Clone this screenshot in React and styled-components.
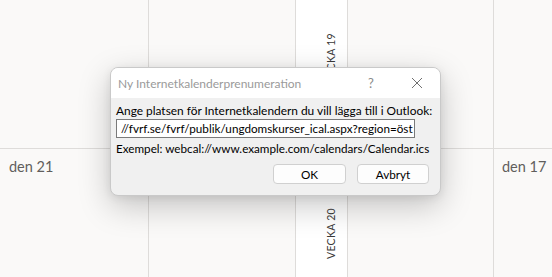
import React from "react";
import styled, { createGlobalStyle } from "styled-components";

const Global = createGlobalStyle`
  html, body { margin: 0; padding: 0; }
  body {
    width: 552px; height: 277px; overflow: hidden;
    background: #faf9f8;
    font-family: "Lato", "Noto Sans", sans-serif;
  }
`;

const Viewport = styled.div`
  width: 552px;
  height: 277px;
  overflow: hidden;
  position: relative;
`;

const Grid = styled.div`
  height: 277px;
  display: grid;
  grid-template-columns: 148px 146px 51px 145px 1fr;
  grid-template-rows: 148px 1fr;
  gap: 1px;
  background: #dedcda;
`;

const DayCell = styled.div`
  background: #faf9f8;
  color: #605e5c;
  font-size: 14.5px;
  white-space: nowrap;
  display: flex;
  align-items: flex-start;
  padding-left: ${(p) => (p.$first ? "9px" : "8px")};
  padding-top: 9px;
`;

const WeekCell = styled.div`
  background: #ffffff;
  display: flex;
  align-items: flex-start;
  justify-content: flex-end;
  padding-right: 10px;
  padding-top: ${(p) => p.$top}px;
`;

const WeekLabel = styled.span`
  writing-mode: vertical-rl;
  transform: rotate(180deg);
  font-size: 10.5px;
  letter-spacing: 0.3px;
  color: #3b3a39;
`;

const Dialog = styled.div`
  position: absolute;
  left: 110px;
  top: 67px;
  width: 331px;
  height: 129px;
  box-sizing: border-box;
  border-radius: 8px;
  border: 1px solid #c9c9c9;
  background: #f0f0f0;
  box-shadow: 0 10px 32px rgba(0, 0, 0, 0.22), 0 2px 8px rgba(0, 0, 0, 0.08);
  overflow: hidden;
  display: flex;
  flex-direction: column;
`;

const TitleBar = styled.div`
  height: 30px;
  background: #ffffff;
  display: flex;
  align-items: center;
  padding-left: 7px;
  color: #9a9a9a;
  font-size: 12px;
  white-space: nowrap;
`;

const Title = styled.span`
  flex: 1;
`;

const TitleButton = styled.span`
  width: 46px;
  height: 30px;
  display: flex;
  align-items: center;
  justify-content: center;
  color: #8a8a8a;
  font-size: 13px;
`;

const Body = styled.div`
  flex: 1;
  padding: 4px 11px 11px 5px;
  display: flex;
  flex-direction: column;
  font-size: 11.7px;
  color: #000;
  white-space: nowrap;
`;

const Label = styled.div`
  height: 17px;
  line-height: 17px;
  font-size: 11.9px;
`;

const Input = styled.div`
  width: 299px;
  height: 19px;
  box-sizing: border-box;
  border: 1px solid #7a7a7a;
  background: #fff;
  padding-left: 4px;
  line-height: 17px;
  overflow: hidden;
`;

const Example = styled.div`
  margin-top: 2px;
  height: 17px;
  line-height: 17px;
`;

const Buttons = styled.div`
  margin-top: auto;
  display: flex;
  justify-content: flex-end;
  gap: 11px;
`;

const Button = styled.div`
  width: ${(p) => p.$w}px;
  height: 20px;
  box-sizing: border-box;
  border: 1px solid #d0d0d0;
  border-radius: 4px;
  background: #fdfdfd;
  display: flex;
  align-items: center;
  justify-content: center;
`;

export default function App() {
  return (
    <>
      <Global />
      <Viewport>
        <Grid>
          <DayCell />
          <DayCell />
          <WeekCell $top={33}>
            <WeekLabel>VECKA 19</WeekLabel>
          </WeekCell>
          <DayCell />
          <DayCell />
          <DayCell $first>den 21</DayCell>
          <DayCell />
          <WeekCell $top={59}>
            <WeekLabel>VECKA 20</WeekLabel>
          </WeekCell>
          <DayCell />
          <DayCell>den 17</DayCell>
        </Grid>
        <Dialog>
          <TitleBar>
            <Title>Ny Internetkalenderprenumeration</Title>
            <TitleButton>?</TitleButton>
            <TitleButton>
              <svg width="12" height="12" viewBox="0 0 12 12">
                <path d="M1 1 L11 11 M11 1 L1 11" stroke="#707070" strokeWidth="1" fill="none" />
              </svg>
            </TitleButton>
          </TitleBar>
          <Body>
            <Label>Ange platsen för Internetkalendern du vill lägga till i Outlook:</Label>
            <Input>//fvrf.se/fvrf/publik/ungdomskurser_ical.aspx?region=öst</Input>
            <Example>Exempel: webcal://www.example.com/calendars/Calendar.ics</Example>
            <Buttons>
              <Button $w={73}>OK</Button>
              <Button $w={72}>Avbryt</Button>
            </Buttons>
          </Body>
        </Dialog>
      </Viewport>
    </>
  );
}
